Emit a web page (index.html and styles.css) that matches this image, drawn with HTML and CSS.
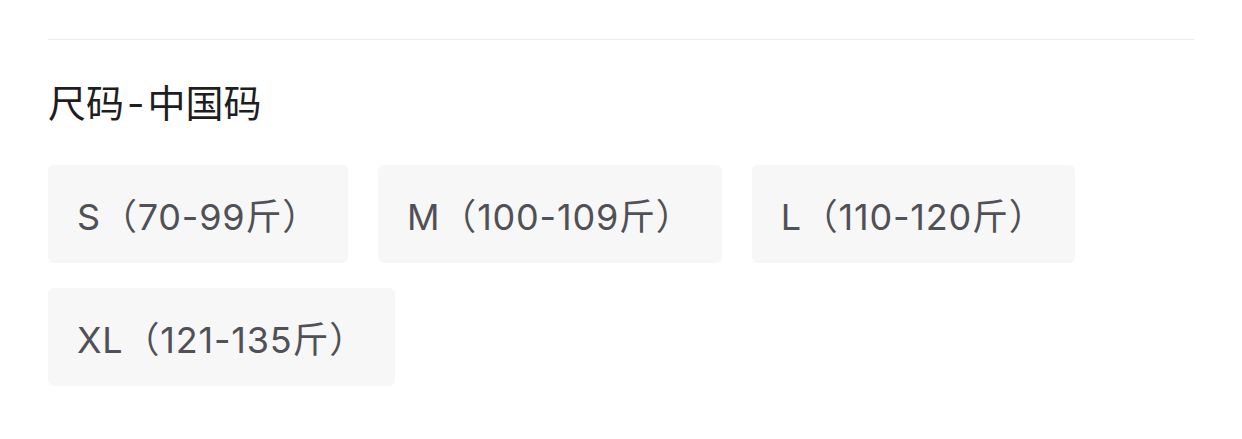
FILE: index.html
```html
<!DOCTYPE html>
<html lang="zh-CN">
<head>
<meta charset="utf-8">
<title>尺码-中国码</title>
<link rel="stylesheet" href="styles.css">
</head>
<body>
<div class="page">
  <div class="divider"></div>
  <h2 class="title">尺码<span class="dash">-</span>中国码</h2>
  <div class="chips">
    <div class="chip">S（70-99斤）</div>
    <div class="chip">M（100-109斤）</div>
    <div class="chip">L（110-120斤）</div>
    <div class="chip">XL（121-135斤）</div>
  </div>
</div>
</body>
</html>
```

FILE: styles.css
```css
html, body {
  margin: 0;
  padding: 0;
  background: #ffffff;
}
body {
  font-family: "Inter", "Noto Sans CJK SC", sans-serif;
}
.page {
  padding: 39px 48px 0;
}
.divider {
  height: 1px;
  background: #ededed;
}
.title {
  margin: 36px 0 0;
  font-size: 38px;
  font-weight: 400;
  line-height: 54px;
  color: #1d1d22;
}
.dash {
  padding: 0 3px;
}
.chips {
  margin-top: 35px;
  display: flex;
  flex-wrap: wrap;
  gap: 25px 30px;
}
.chip {
  height: 98px;
  padding: 0 29px;
  display: flex;
  align-items: center;
  background: #f7f7f7;
  border-radius: 6px;
  font-size: 36px;
  letter-spacing: 0.8px;
  color: #505056;
  white-space: nowrap;
}
```
